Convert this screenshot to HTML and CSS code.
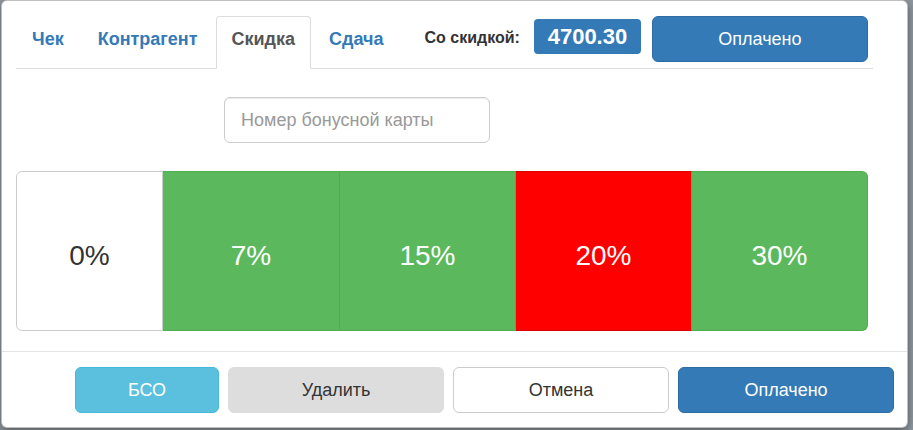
FILE: index.html
```html
<!DOCTYPE html>
<html lang="ru">
<head>
<meta charset="utf-8">
<title>Скидка</title>
<link rel="stylesheet" href="styles.css">
</head>
<body>
<div class="modal">
  <div class="top">
    <ul class="tabs">
      <li><a href="#">Чек</a></li>
      <li><a href="#">Контрагент</a></li>
      <li class="active"><a href="#">Скидка</a></li>
      <li><a href="#">Сдача</a></li>
    </ul>
    <div class="summary">
      <span class="sum-label">Со скидкой:</span>
      <span class="sum-badge">4700.30</span>
      <button class="btn btn-primary btn-top">Оплачено</button>
    </div>
  </div>
  <div class="body">
    <input class="card-input" type="text" placeholder="Номер бонусной карты">
    <div class="discounts">
      <button class="seg seg-zero">0%</button>
      <button class="seg seg-green seg-wide">7%</button>
      <button class="seg seg-green">15%</button>
      <button class="seg seg-red">20%</button>
      <button class="seg seg-green seg-last">30%</button>
    </div>
  </div>
  <div class="footer">
    <button class="btn btn-info btn-bso">БСО</button>
    <button class="btn btn-gray">Удалить</button>
    <button class="btn btn-default">Отмена</button>
    <button class="btn btn-primary">Оплачено</button>
  </div>
</div>
</body>
</html>
```
FILE: styles.css
```css
* { box-sizing: border-box; }
html, body { margin: 0; padding: 0; }
body {
  width: 913px;
  height: 430px;
  overflow: hidden;
  background: #8d969e;
  font-family: "Liberation Sans", Arial, sans-serif;
  color: #333;
}
.modal {
  margin-left: 1px;
  width: 907px;
  height: 428px;
  background: #fff;
  border: 1px solid rgba(0,0,0,.25);
  border-radius: 6px;
  box-shadow: 0 3px 9px rgba(0,0,0,.4);
  overflow: hidden;
  padding-top: 15px;
}
.top {
  margin-left: 14px;
  width: 857px;
  display: flex;
  align-items: flex-start;
  border-bottom: 1px solid #ddd;
}
.tabs {
  list-style: none;
  margin: 0 0 -1px 0;
  padding: 0;
  display: flex;
}
.tabs li { margin-right: 2px; }
.tabs a {
  display: block;
  padding: 11px 15px 18px;
  line-height: 22px;
  font-size: 18px;
  font-weight: bold;
  color: #337ab7;
  text-decoration: none;
  border: 1px solid transparent;
  border-radius: 4px 4px 0 0;
}
.tabs .active a {
  color: #555;
  background: #fff;
  border-color: #ddd;
  border-bottom-color: #fff;
}
.summary {
  display: flex;
  align-items: flex-start;
  margin-left: 23px;
}
.sum-label {
  font-size: 16px;
  font-weight: bold;
  line-height: 46px;
  margin-top: -1px;
  color: #333;
}
.sum-badge {
  margin-left: 14px;
  margin-top: 3px;
  width: 107px;
  height: 35px;
  text-align: center;
  background: #337ab7;
  color: #fff;
  font-size: 22px;
  font-weight: bold;
  line-height: 35px;
  border-radius: 4px;
}
.btn {
  height: 46px;
  padding: 10px 16px;
  font-family: inherit;
  font-size: 18px;
  line-height: 24px;
  border: 1px solid transparent;
  border-radius: 6px;
  width: 216px;
  cursor: pointer;
}
.btn-top { margin-left: 11px; }
.btn-primary { background: #337ab7; border-color: #2e6da4; color: #fff; }
.btn-info { background: #5bc0de; border-color: #46b8da; color: #fff; }
.btn-gray { background: #dddddd; border-color: #dddddd; color: #333; }
.btn-default { background: #fff; border-color: #ccc; color: #333; }
.btn-bso { width: 144px; }
.body {
  padding: 0 0 0 14px;
}
.card-input {
  display: block;
  margin: 28px 0 0 208px;
  width: 266px;
  height: 46px;
  padding: 10px 16px;
  font-family: inherit;
  font-size: 18px;
  line-height: 24px;
  color: #555;
  border: 1px solid #ccc;
  border-radius: 6px;
  box-shadow: inset 0 1px 1px rgba(0,0,0,.075);
  outline: none;
}
.card-input::placeholder { color: #999; }
.discounts {
  margin-top: 28px;
  width: 852px;
  height: 160px;
  display: flex;
}
.seg {
  flex: 0 0 176px;
  height: 100%;
  margin: 0;
  padding: 10px 0 0;
  font-family: inherit;
  font-size: 28px;
  color: #fff;
  border: 1px solid #4cae4c;
  border-left-width: 0;
  border-radius: 0;
}
.seg-wide { flex-basis: 177px; }
.seg-zero {
  flex: 0 0 147px;
  background: #fff;
  color: #333;
  border-color: #ccc;
  border-left-width: 1px;
  border-radius: 6px 0 0 6px;
}
.seg-green { background: #5cb85c; }
.seg-red { background: #ff0000; border-color: #d80000; border-left-color: #4cae4c; border-right-color: #4cae4c; }
.seg-last { flex: 1 1 0; border-radius: 0 6px 6px 0; }
.footer {
  margin-top: 20px;
  border-top: 1px solid #e5e5e5;
  padding: 15px 13px 15px 15px;
  display: flex;
  justify-content: flex-end;
  gap: 9px;
}
```
